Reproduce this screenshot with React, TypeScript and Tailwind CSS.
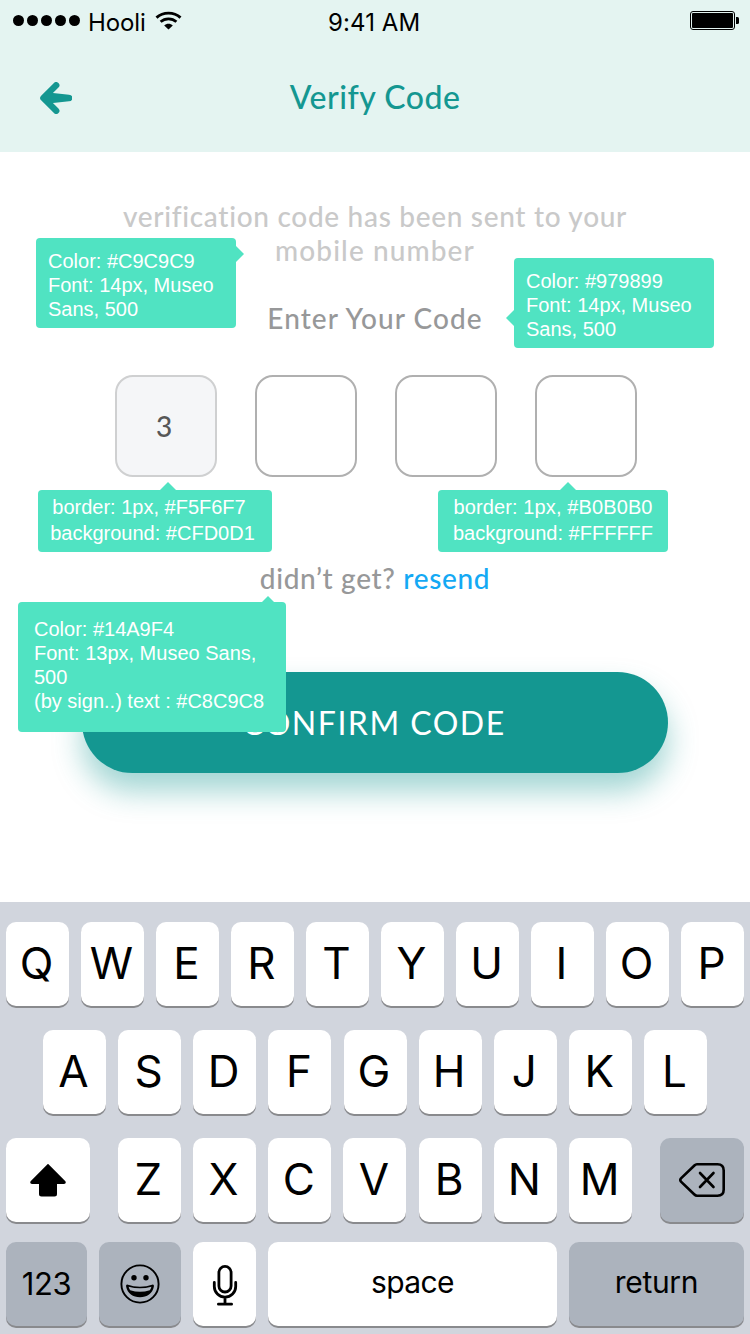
import type { ReactNode } from "react";

function StatusBar() {
  return (
    <div className="flex h-10 items-center pl-[13px] font-['Inter','Liberation_Sans',sans-serif] text-2xl text-black">
      <div className="flex w-[315px] items-center">
        <div className="flex gap-[3px]">
          {[0, 1, 2, 3, 4].map((i) => (
            <span key={i} className="size-[11px] rounded-full bg-black" />
          ))}
        </div>
        <span className="ml-2 pt-[5px] leading-10 tracking-[-0.1px]">Hooli</span>
        <svg className="ml-[9px]" width="27" height="19" viewBox="0 0 27 19" fill="none">
          <path d="M1.5 6.6C8.2 .6 18.8 .6 25.5 6.6" stroke="#000" strokeWidth="2.9" />
          <path d="M5.6 10.8C10 6.8 17 6.8 21.4 10.8" stroke="#000" strokeWidth="2.7" />
          <path d="M9.2 14.4C11.6 12.2 15.4 12.2 17.8 14.4L13.5 18.6Z" fill="#000" />
        </svg>
      </div>
      <span className="pt-[5px] leading-10 tracking-[0.1px]">9:41 AM</span>
      <svg className="mr-[11px] ml-auto" width="49" height="19" viewBox="0 0 49 19">
        <rect x=".5" y=".5" width="44" height="18" rx="2.5" fill="none" stroke="#000" />
        <rect x="2" y="2" width="41" height="15" rx="1" fill="#000" />
        <path d="M46 6h1.5q1.5 0 1.5 1.5v4q0 1.5-1.5 1.5H46Z" fill="#000" />
      </svg>
    </div>
  );
}

function BackArrow() {
  return (
    <svg width="32" height="32" viewBox="0 0 32 32" className="text-[#149791]">
      <path
        d="M16.2 3.3L3.4 16L16.2 28.7"
        fill="none"
        stroke="currentColor"
        strokeWidth="6.4"
        strokeLinecap="round"
        strokeLinejoin="round"
      />
      <path d="M3 16L10 9.5L13 11L29 12.7A3.3 3.3 0 0 1 29 19.3L13 21L10 22.5Z" fill="currentColor" />
    </svg>
  );
}

function CodeBox({ value }: { value?: string }) {
  return (
    <div
      className={
        value
          ? "flex size-[102px] items-center justify-center rounded-[18px] border-2 border-[#cfd0d1] bg-[#f5f6f8] pr-1 text-[28px] text-[#575757]"
          : "size-[102px] rounded-[18px] border-2 border-[#b0b0b0] bg-white"
      }
    >
      {value}
    </div>
  );
}

function Note({ place, children }: { place: string; children: ReactNode }) {
  return (
    <div
      className={`absolute rounded-[4px] bg-[#50e3c2] font-['Liberation_Sans',Arial,sans-serif] text-xl whitespace-nowrap text-white ${place}`}
    >
      {children}
    </div>
  );
}

function Pointer({ place, points }: { place: string; points: string }) {
  return (
    <svg className={`absolute ${place}`} width="16" height="16" viewBox="0 0 16 16">
      <polygon points={points} fill="#50e3c2" />
    </svg>
  );
}

function Key({ children, size = "w-[63px]", dark = false, text = "text-[44px] pb-0.5 pr-0.5" }: {
  children: ReactNode;
  size?: string;
  dark?: boolean;
  text?: string;
}) {
  return (
    <div
      className={`flex h-[84px] shrink-0 items-center justify-center rounded-[10px] leading-none shadow-[0_2px_0_#898a8d] ${
        dark ? "bg-[#acb3bd]" : "bg-white"
      } ${size} ${text}`}
    >
      {children}
    </div>
  );
}

function Keyboard() {
  return (
    <div className="flex h-[432px] flex-col bg-[#d1d5dd] px-1.5 pt-5 font-['Inter','Liberation_Sans',sans-serif] text-black">
      <div className="flex justify-between">
        {"QWERTYUIOP".split("").map((k) => (
          <Key key={k}>{k}</Key>
        ))}
      </div>
      <div className="mt-6 flex justify-between px-[37px]">
        {"ASDFGHJKL".split("").map((k) => (
          <Key key={k}>{k}</Key>
        ))}
      </div>
      <div className="mt-6 flex justify-between">
        <Key size="w-[84px]" text="">
          <svg width="36" height="34" viewBox="0 0 36 34">
            <path
              d="M18 .8L35.4 18.2Q36.6 20.8 34 21H27V31Q27 33.5 24.5 33.5H11.5Q9 33.5 9 31V21H2Q-.6 20.8 .6 18.2Z"
              fill="#000"
            />
          </svg>
        </Key>
        <div className="flex w-[514.4px] justify-between">
          {"ZXCVBNM".split("").map((k) => (
            <Key key={k}>{k}</Key>
          ))}
        </div>
        <Key size="w-[84px]" dark text="">
          <svg width="46" height="34" viewBox="0 0 46 34" fill="none" stroke="#000" strokeLinecap="round">
            <path
              d="M18 1.3H38.5Q44.7 1.3 44.7 7.5V26.5Q44.7 32.7 38.5 32.7H18Q16.6 32.7 15.4 31.5L2 18.6Q.6 17 2 15.4L15.4 2.5Q16.6 1.3 18 1.3Z"
              strokeWidth="2.6"
            />
            <path d="M21 10L34.5 24M34.5 10L21 24" strokeWidth="2.6" />
          </svg>
        </Key>
      </div>
      <div className="mt-5 flex gap-3">
        <Key size="w-[81px]" dark text="text-[31px] tracking-[-0.4px] pb-0.5">
          123
        </Key>
        <Key size="w-[82px]" dark text="pr-px">
          <svg width="40" height="40" viewBox="0 0 40 40">
            <circle cx="20" cy="20" r="18.6" fill="none" stroke="#000" strokeWidth="1.9" />
            <circle cx="14" cy="13.8" r="2.7" />
            <circle cx="26" cy="13.8" r="2.7" />
            <path d="M7.1 20.5Q20 25 32.9 20.5Q34.2 20.5 33.9 22.5C32.5 29.5 27 33.3 20 33.3S7.5 29.5 6.1 22.5Q5.8 20.5 7.1 20.5Z" />
            <path
              d="M8.6 22.7Q20 26 31.4 22.7Q30.7 25.3 29.8 26.3Q20 29.3 10.2 26.3Q9.3 25.3 8.6 22.7Z"
              fill="#acb3bd"
            />
          </svg>
        </Key>
        <Key text="pt-0.5">
          <svg width="26" height="42" viewBox="0 0 26 42" fill="none" stroke="#000" strokeWidth="2.8" strokeLinecap="round">
            <rect x="6.9" y="2.4" width="12.2" height="25.6" rx="6.1" />
            <path d="M2.3 18.500V22.500A10.7 10.700 0 0 0 23.700 22.500V18.500M13 33.500V40M6.400 40.200H19.600" />
          </svg>
        </Key>
        <Key size="w-[289px]" text="text-[30px] tracking-[-0.6px] pb-1">
          space
        </Key>
        <Key size="w-[175px]" dark text="text-[30px] tracking-[-0.3px] pb-1">
          return
        </Key>
      </div>
    </div>
  );
}

export default function App() {
  return (
    <div className="relative flex h-[1334px] w-[750px] flex-col overflow-hidden bg-white font-['Lato','Open_Sans',sans-serif]">
      <header className="h-[152px] bg-[#e4f4f1]">
        <StatusBar />
        <div className="grid h-28 grid-cols-[72px_1fr_72px] items-center">
          <div className="flex justify-end pt-1">
            <BackArrow />
          </div>
          <h1 className="pt-0.5 text-center text-[32px] font-medium tracking-[0.5px] text-[#149791]">Verify Code</h1>
        </div>
      </header>

      <main className="flex h-[750px] flex-col items-center pt-[47px] text-[28px] leading-[34px] font-medium">
        <p className="text-center text-[#c9c9c9]">
          <span className="tracking-[0.69px]">verification code has been sent to your</span>
          <br />
          <span className="tracking-[1.1px]">mobile number</span>
        </p>
        <p className="mt-[34px] tracking-[1.05px] text-[#979899]">Enter Your Code</p>
        <div className="mt-10 flex gap-[38px] pl-0.5">
          <CodeBox value="3" />
          <CodeBox />
          <CodeBox />
          <CodeBox />
        </div>
        <p className="mt-[84px] tracking-[0.65px] text-[#979899]">
          didn’t get? <span className="text-[#14a9f4]">resend</span>
        </p>
        <button className="mt-[77px] h-[101px] w-[586px] rounded-full bg-[#149791] pr-0.5 text-[32px] font-normal tracking-[1.5px] text-white shadow-[0_18px_30px_rgba(20,151,145,0.4)]">
          CONFIRM CODE
        </button>
      </main>

      <Keyboard />

      <Note place="left-[36px] top-[238px] h-[90px] w-[200px] px-3 pt-[11px] leading-6">
        Color: #C9C9C9
        <br />
        Font: 14px, Museo
        <br />
        Sans, 500
        <Pointer place="-right-4 top-2" points="0,0 8,8 0,16" />
      </Note>
      <Note place="left-[514px] top-[258px] h-[90px] w-[200px] px-3 pt-[11px] leading-6">
        Color: #979899
        <br />
        Font: 14px, Museo
        <br />
        Sans, 500
        <Pointer place="-left-4 top-[52px]" points="16,0 8,8 16,16" />
      </Note>
      <Note place="left-[38px] top-[490px] h-[62px] w-[234px] pt-1 pr-[5px] text-center leading-[26px]">
        <p className="pr-[7px]">border: 1px, #F5F6F7</p>
        <p>background: #CFD0D1</p>
        <Pointer place="left-[122px] -top-4" points="0,16 8,8 16,16" />
      </Note>
      <Note place="left-[438px] top-[490px] h-[62px] w-[230px] pt-1 text-center leading-[26px]">
        <p className="tracking-[0.12px]">border: 1px, #B0B0B0</p>
        <p>background: #FFFFFF</p>
        <Pointer place="left-[122px] -top-4" points="0,16 8,8 16,16" />
      </Note>
      <Note place="left-[18px] top-[602px] h-[130px] w-[268px] px-4 pt-[15px] leading-6">
        Color: #14A9F4
        <br />
        Font: 13px, Museo Sans,
        <br />
        500
        <br />
        (by sign..) text : #C8C9C8
        <Pointer place="left-[242px] -top-4" points="2,16 8,10 14,16" />
      </Note>
    </div>
  );
}
